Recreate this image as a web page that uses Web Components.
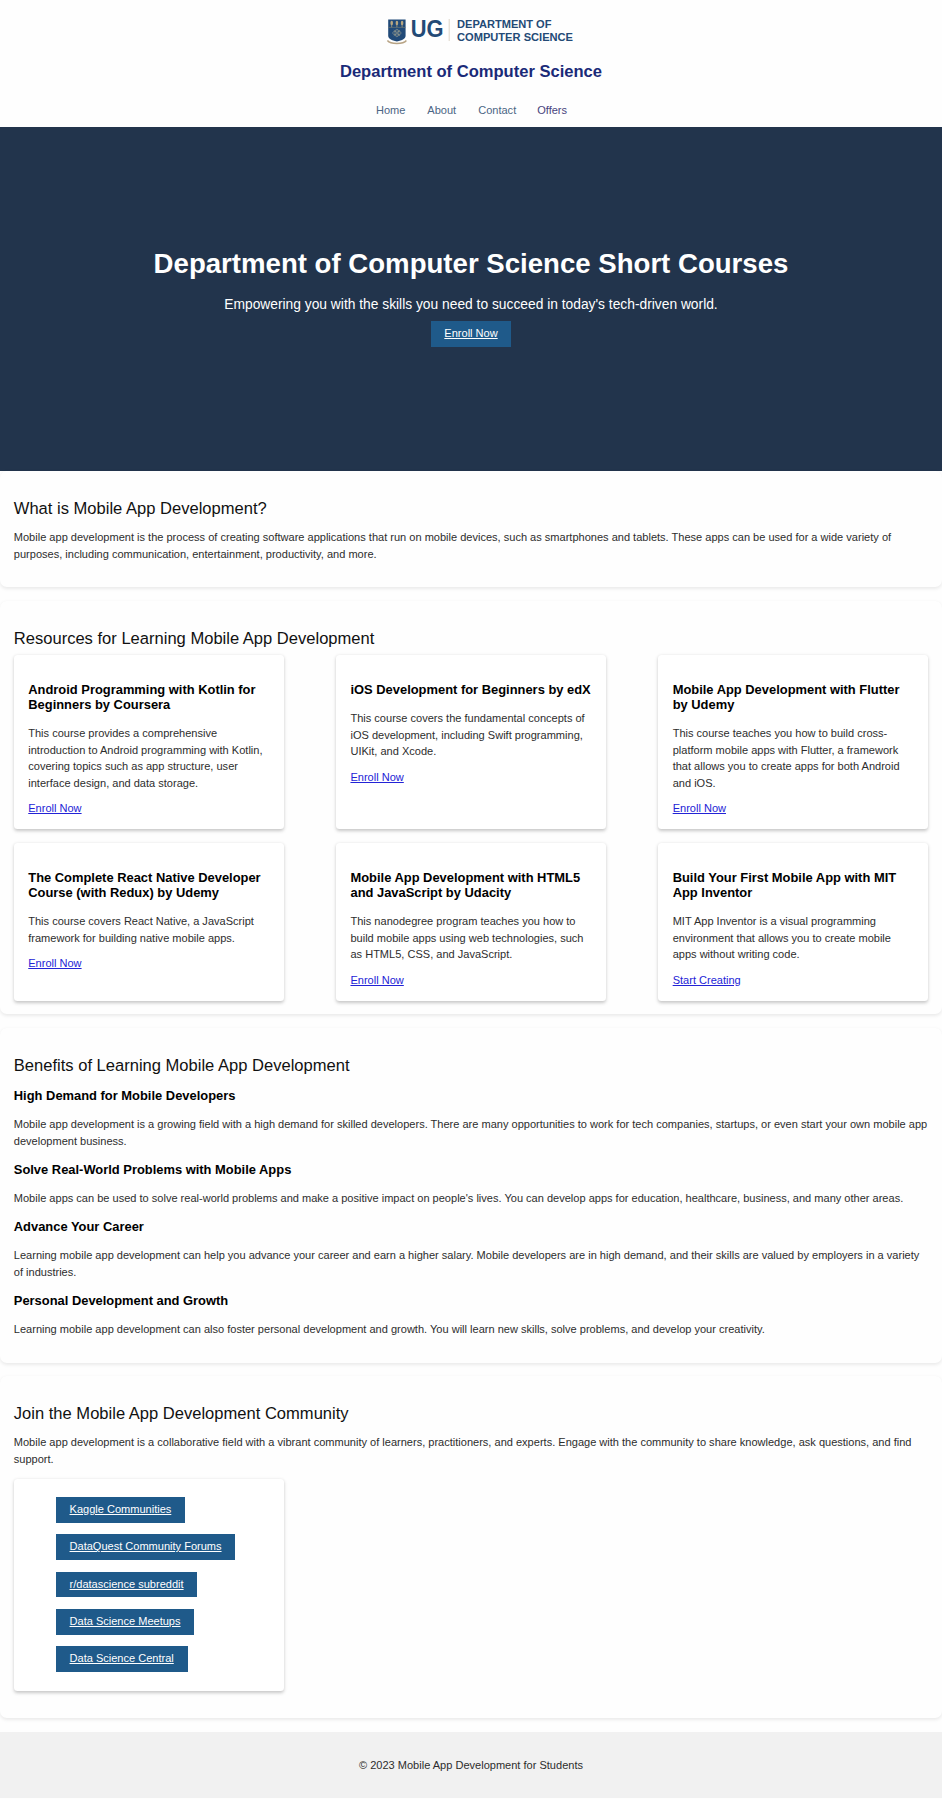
<!DOCTYPE html>
<html lang="en">
<head>
<meta charset="utf-8">
<title>Department of Computer Science Short Courses</title>
<style>
html { background: #fefefe; font-size: 11.04px; }
body { margin: 0; font: 1rem "Liberation Sans", Arial, sans-serif; color: #2d2d2d; overflow-x: clip; }
</style>
</head>
<body>
<site-header></site-header>
<hero-banner>
  <span slot="title">Department of Computer Science Short Courses</span>
  <span slot="lead">Empowering you with the skills you need to succeed in today's tech-driven world.</span>
  <action-button slot="action">Enroll Now</action-button>
</hero-banner>
<page-section heading="What is Mobile App Development?">
  <text-block>Mobile app development is the process of creating software applications that run on mobile devices, such as smartphones and tablets. These apps can be used for a wide variety of purposes, including communication, entertainment, productivity, and more.</text-block>
</page-section>
<page-section heading="Resources for Learning Mobile App Development">
  <card-grid>
    <course-card heading="Android Programming with Kotlin for Beginners by Coursera" action="Enroll Now">This course provides a comprehensive introduction to Android programming with Kotlin, covering topics such as app structure, user interface design, and data storage.</course-card>
    <course-card heading="iOS Development for Beginners by edX" action="Enroll Now">This course covers the fundamental concepts of iOS development, including Swift programming, UIKit, and Xcode.</course-card>
    <course-card heading="Mobile App Development with Flutter by Udemy" action="Enroll Now">This course teaches you how to build cross-platform mobile apps with Flutter, a framework that allows you to create apps for both Android and iOS.</course-card>
    <course-card heading="The Complete React Native Developer Course (with Redux) by Udemy" action="Enroll Now">This course covers React Native, a JavaScript framework for building native mobile apps.</course-card>
    <course-card heading="Mobile App Development with HTML5 and JavaScript by Udacity" action="Enroll Now">This nanodegree program teaches you how to build mobile apps using web technologies, such as HTML5, CSS, and JavaScript.</course-card>
    <course-card heading="Build Your First Mobile App with MIT App Inventor" action="Start Creating">MIT App Inventor is a visual programming environment that allows you to create mobile apps without writing code.</course-card>
  </card-grid>
</page-section>
<page-section heading="Benefits of Learning Mobile App Development">
  <text-block heading="High Demand for Mobile Developers">Mobile app development is a growing field with a high demand for skilled developers. There are many opportunities to work for tech companies, startups, or even start your own mobile app development business.</text-block>
  <text-block heading="Solve Real-World Problems with Mobile Apps">Mobile apps can be used to solve real-world problems and make a positive impact on people's lives. You can develop apps for education, healthcare, business, and many other areas.</text-block>
  <text-block heading="Advance Your Career">Learning mobile app development can help you advance your career and earn a higher salary. Mobile developers are in high demand, and their skills are valued by employers in a variety of industries.</text-block>
  <text-block heading="Personal Development and Growth">Learning mobile app development can also foster personal development and growth. You will learn new skills, solve problems, and develop your creativity.</text-block>
</page-section>
<page-section heading="Join the Mobile App Development Community">
  <text-block>Mobile app development is a collaborative field with a vibrant community of learners, practitioners, and experts. Engage with the community to share knowledge, ask questions, and find support.</text-block>
  <link-card>
    <action-button>Kaggle Communities</action-button>
    <action-button>DataQuest Community Forums</action-button>
    <action-button>r/datascience subreddit</action-button>
    <action-button>Data Science Meetups</action-button>
    <action-button>Data Science Central</action-button>
  </link-card>
</page-section>
<site-footer>© 2023 Mobile App Development for Students</site-footer>
<script>
const define = (name, markup) => customElements.define(name, class extends HTMLElement {
  connectedCallback() {
    if (this.shadowRoot) return;
    const t = document.createElement('template');
    t.innerHTML = typeof markup === 'function' ? markup(this) : markup;
    this.attachShadow({ mode: 'open' }).append(t.content.cloneNode(true));
  }
});

define('brand-logo', `
<style>
:host { display: block; width: 200px; height: 34px; }
svg { display: block; width: 100%; height: 100%; overflow: visible; }
text { font-family: "Liberation Sans", Arial, sans-serif; font-weight: 700; fill: #234a76; }
</style>
<svg viewBox="380 14 200 34" role="img" aria-label="University of Ghana">
  <path d="M388.2 19.4h17.4v16.4c0 3-3.2 4.6-8.7 5.8-5.5-1.2-8.7-2.8-8.7-5.8z" fill="#214a78"/>
  <path d="M388.2 27.4h17.4" stroke="#6f7775" stroke-width=".7"/>
  <g fill="#b9a780"><ellipse cx="391.7" cy="23" rx="1.3" ry="2.2"/><ellipse cx="396.9" cy="23" rx="1.3" ry="2.2"/><ellipse cx="402.1" cy="23" rx="1.3" ry="2.2"/></g>
  <path d="M391.7 23v4.2M396.9 23v4.2M402.1 23v4.2" stroke="#b9a780" stroke-width=".7"/>
  <g fill="none" stroke="#8f968c" stroke-width=".7"><ellipse cx="396.9" cy="33" rx="4.3" ry="2"/><ellipse cx="396.9" cy="33" rx="2" ry="3.8"/><path d="M393.8 30.2l6.2 5.6M400 30.2l-6.2 5.6"/></g>
  <path d="M387.4 40.4c2 2.4 5 3 9.5 3s7.5-.6 9.5-3" fill="none" stroke="#b7a384" stroke-width="1.5"/>
  <text x="410.8" y="36.8" font-size="23.5" textLength="32.8" lengthAdjust="spacingAndGlyphs">UG</text>
  <path d="M449.2 19v22" stroke="#ddd6c8"/>
  <text x="457" y="28.4" font-size="11.8" textLength="94.5" lengthAdjust="spacingAndGlyphs">DEPARTMENT OF</text>
  <text x="457" y="40.6" font-size="11.8" textLength="116" lengthAdjust="spacingAndGlyphs">COMPUTER SCIENCE</text>
</svg>`);

define('site-header', `
<style>
:host { display: flex; flex-direction: column; align-items: center; height: 127px; box-sizing: border-box; padding-top: 14px; }
brand-logo { margin-left: 18px; }
h1 { margin: 15px 0 0; font-size: 1.5rem; line-height: 18px; color: #1a2a78; }
nav { display: flex; margin-top: 23px; padding-left: 1px; }
a { color: #4b6584; line-height: 12px; margin-right: 22px; }
a:nth-child(3) { margin-right: 21px; }
a:last-child { margin-right: 0; color: #47427d; }
</style>
<brand-logo></brand-logo>
<h1>Department of Computer Science</h1>
<nav><a>Home</a><a>About</a><a>Contact</a><a>Offers</a></nav>`);

define('hero-banner', `
<style>
:host { display: flex; flex-direction: column; align-items: center; height: 344.4px; box-sizing: border-box; padding-top: 120.5px; background: #22344c; color: #fff; text-align: center; }
h1 { margin: 0; font-size: 2.5rem; line-height: 32px; }
p { margin: 14px 0 6.5px; font-size: 1.25rem; line-height: 21px; }
</style>
<h1><slot name="title"></slot></h1>
<p><slot name="lead"></slot></p>
<slot name="action"></slot>`);

define('action-button', `
<style>
:host { display: block; width: fit-content; }
a { display: block; padding: .64rem 1.25rem; line-height: 1.05rem; background: #1f5a8a; color: #fff; text-decoration: underline; white-space: nowrap; }
</style>
<a><slot></slot></a>`);

define('page-section', el => `
<style>
:host { display: block; padding: 1.25rem; margin-bottom: 1.25rem; border-radius: 7px; background: #fefefe; box-shadow: 0 1.4px 3.5px rgba(0,0,0,.08); }
h2 { margin: 1.25rem 0 .64rem; font-size: 1.5rem; line-height: 1.755rem; font-weight: 400; color: #111; }
</style>
<h2>${el.getAttribute('heading')}</h2>
<slot></slot>`);

define('text-block', el => `
<style>
:host { display: block; }
h3 { margin: 1.17rem 0; font-size: 1.17rem; line-height: 1.36rem; color: #000; }
p { margin: 1rem 0; line-height: 1.5; }
</style>
${el.hasAttribute('heading') ? `<h3>${el.getAttribute('heading')}</h3>` : ''}
<p><slot></slot></p>`);

define('card-grid', `
<style>
:host { display: grid; grid-template-columns: repeat(3, 270px); justify-content: space-between; row-gap: 1.3rem; }
</style>
<slot></slot>`);

define('course-card', el => `
<style>
:host { display: block; box-sizing: border-box; padding: 1.28rem 1.31rem; border-radius: 3.5px; background: #fff; box-shadow: 0 1.4px 3.5px rgba(0,0,0,.22); }
h3 { margin: 1.17rem 0; font-size: 1.17rem; line-height: 1.36rem; color: #000; }
p { margin: 1rem 0; line-height: 1.5; }
a { display: block; line-height: 1.125rem; color: #2323d6; text-decoration: underline; }
</style>
<h3>${el.getAttribute('heading')}</h3>
<p><slot></slot></p>
<a>${el.getAttribute('action')}</a>`);

define('link-card', `
<style>
:host { display: flex; flex-direction: column; gap: 1.04rem; box-sizing: border-box; width: 270px; margin-bottom: 1.25rem; padding: 1.69rem 1.3rem 1.72rem 3.8rem; border-radius: 3.5px; background: #fff; box-shadow: 0 1.4px 3.5px rgba(0,0,0,.22); }
</style>
<slot></slot>`);

define('site-footer', `
<style>
:host { display: block; padding: 1.25rem; background: #f1f1f1; text-align: center; }
p { margin: 1rem 0; line-height: 1.5; }
</style>
<p><slot></slot></p>`);
</script>
</body>
</html>
